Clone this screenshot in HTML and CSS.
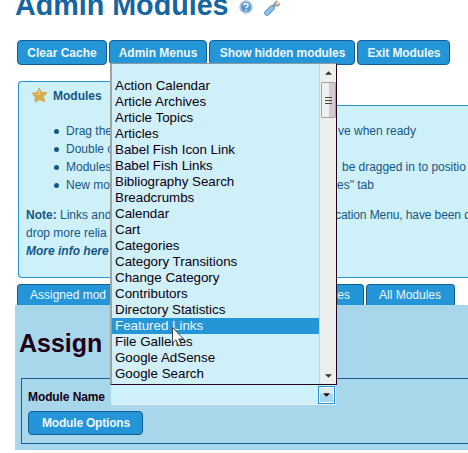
FILE: index.html
```html
<!DOCTYPE html>
<html lang="en">
<head>
<meta charset="utf-8">
<title>Admin Modules</title>
<link rel="stylesheet" href="styles.css">
</head>
<body>
<header class="page-head">
  <h1>Admin Modules</h1>
  <svg class="help" viewBox="0 0 14 14" width="14" height="14"><circle cx="7" cy="7" r="6" fill="#78acd9" stroke="#b3c7db" stroke-width="1.6"/><circle cx="7" cy="7" r="4.5" fill="#5594cd"/><path d="M5 5.5C5 3.3 9 3.3 9 5.5 9 6.9 7 6.8 7 8.2M7 9.5v1.4" fill="none" stroke="#fff" stroke-width="1.5"/></svg>
  <svg class="wrench" viewBox="0 0 17 16" width="17" height="16"><path d="M8 7.5 12 3.5" stroke="#8c8885" stroke-width="2.6"/><path d="M13.5 1 11 3.2 11.3 5.4 13.5 5.8 16 3.6" fill="none" stroke="#aaa39d" stroke-width="2"/><path d="M3 13 8 8" stroke="#5693c7" stroke-width="5.4" stroke-linecap="round"/><path d="M3 13 8 8" stroke="#9dcbed" stroke-width="3.2" stroke-linecap="round"/><path d="M4 12.5 8 8.5" stroke="#6aa6d6" stroke-width="1"/></svg>
</header>
<nav class="actions">
  <a class="button clear">Clear Cache</a>
  <a class="button menus">Admin Menus</a>
  <a class="button hidden-modules">Show hidden modules</a>
  <a class="button exit">Exit Modules</a>
</nav>
<section class="notice">
  <div class="notice-title">
    <svg viewBox="0 0 17 16" width="17" height="16"><path d="M8.2 1 10.2 5.2 16 5.6 12.2 9.5 13.8 14.7 8.6 12.8 4 15 4.2 10 1 6.3 6 5.5Z" fill="#d9ac4b" stroke="#cba253" stroke-width=".8"/><path d="M8 3 8.8 7 5 7.5" fill="none" stroke="#eccb79" stroke-width="1.2"/></svg>
    <span>Modules</span>
  </div>
  <div class="notice-body">
    <div class="lines">
      <div class="row"><span class="left item">Drag the</span><span class="r1">ve when ready</span></div>
      <div class="row"><span class="left item">Double c</span></div>
      <div class="row"><span class="left item">Modules</span><span class="r2">be dragged in to positio</span></div>
      <div class="row"><span class="left item">New mo</span><span class="r3">es" tab</span></div>
    </div>
    <div class="note">
      <div class="row"><span class="left"><b>Note:</b> Links and</span><span class="r4">cation Menu, have been d</span></div>
      <div class="row"><span class="left">drop more relia</span></div>
      <div class="row"><b><i>More info here</i></b></div>
    </div>
  </div>
</section>
<nav class="tabs">
  <a class="tab assigned">Assigned mod</a>
  <a class="tab modules">es</a>
  <a class="tab all">All Modules</a>
</nav>
<main class="panel">
  <h2>Assign</h2>
  <div class="fieldset">
    <div class="field"><label>Module Name</label>
      <div class="select"><span class="select-button"><svg viewBox="0 0 8 4" width="7" height="4"><path d="M0 0H8L4 4Z" fill="#200017"/></svg></span></div>
    </div>
    <a class="button options">Module Options</a>
  </div>
</main>
<div class="dropdown">
  <ul>
    <li>Action Calendar</li><li>Article Archives</li><li>Article Topics</li><li>Articles</li><li>Babel Fish Icon Link</li><li>Babel Fish Links</li><li>Bibliography Search</li><li>Breadcrumbs</li><li>Calendar</li><li>Cart</li><li>Categories</li><li>Category Transitions</li><li>Change Category</li><li>Contributors</li><li>Directory Statistics</li><li class="selected">Featured Links</li><li>File Galleries</li><li>Google AdSense</li><li>Google Search</li>
  </ul>
  <div class="scrollbar">
    <svg class="up" viewBox="0 0 8 4" width="7" height="4"><path d="M0 4H8L4 0Z" fill="#3a302d"/></svg>
    <div class="thumb"><i></i><i></i><i></i></div>
    <svg class="down" viewBox="0 0 8 4" width="7" height="4"><path d="M0 0H8L4 4Z" fill="#3a302d"/></svg>
  </div>
</div>
<svg class="cursor" viewBox="0 0 13 20" width="13" height="20"><path d="M.5 .5V16L4 12.8 6.7 18.8 9.3 17.7 6.7 12H11.5Z" fill="#fff" stroke="#333" stroke-width=".9"/></svg>
</body>
</html>
```

FILE: styles.css
```css
* { box-sizing: border-box; }
html, body { margin: 0; height: 453px; overflow: hidden; background: #fff; }
body { position: relative; width: 468px; font: 12px/18px "Liberation Sans", Arial, sans-serif; color: #165786; }
.page-head { height: 40px; display: flex; align-items: flex-start; padding-left: 15px; }
h1 { margin: -11px 0 0; width: 224px; font-size: 28.7px; line-height: 32px; color: #1565a2; white-space: nowrap; }
.wrench { margin-left: 11px; }
.actions { display: flex; gap: 2px; padding-left: 17px; height: 41px; }
.button { display: flex; align-items: center; justify-content: center; height: 25px; border: 1px solid #165c95; border-radius: 4px; background: #2496d8; color: #eef8fc; font-weight: bold; white-space: nowrap; }
.clear { width: 90px; }
.menus { width: 98px; }
.hidden-modules { width: 146px; padding-left: 1px; letter-spacing: -.1px; }
.exit { width: 93px; padding-left: 1px; letter-spacing: -.1px; }
.notice { margin-left: 18px; height: 197px; display: flex; flex-direction: column; }
.notice-title { position: relative; width: 200px; height: 25px; margin-bottom: -1px; z-index: 1; display: flex; gap: 5px; padding: 5px 0 0 12px; border: 1px solid #2496d8; border-width: 1px 0 0 1px; border-radius: 4px 0 0; background: #cef0f9; font-weight: bold; }
.notice-body { height: 173px; border: 1px solid #2496d8; border-right: 0; border-radius: 0 0 0 4px; background: #cef0f9; padding: 16px 0 0 7px; }
.row { display: flex; height: 18px; white-space: nowrap; }
.left { width: 88px; overflow: hidden; flex: none; }
.lines .left { margin-left: 40px; width: 50px; }
.lines .row::before { content: ""; width: 5px; height: 5px; border-radius: 50%; background: #165786; margin: 7px -33px 0 28px; flex: none; }
.r1 { margin-left: 222px; }
.r2 { margin-left: 226px; letter-spacing: -.04px; }
.r3 { margin-left: 221px; }
.r4 { margin-left: 221px; letter-spacing: -.1px; }
.note { margin-top: 12px; }
.tabs { display: flex; padding-left: 17px; height: 27px; align-items: flex-end; }
.tab { height: 21px; border: 1px solid #165c95; border-bottom: 0; border-radius: 4px 4px 0 0; background: #2496d8; color: #eef8fc; white-space: nowrap; line-height: 20px; }
.assigned { width: 120px; padding-left: 12px; }
.modules { width: 64px; margin-left: 163px; padding-right: 13px; text-align: right; }
.all { width: 89px; margin-left: 2px; padding-left: 12px; }
.panel { margin-left: 15px; height: 145px; background: #a8d7eb; padding: 22px 0 0 6px; }
h2 { margin: 0 0 19px -2px; font-size: 25px; line-height: 32px; color: #200017; }
.fieldset { height: 66px; border: 1px solid #165c95; border-right: 0; padding: 6px; }
.field { display: flex; height: 20px; }
label { width: 83px; color: #170014; font-weight: bold; line-height: 24px; letter-spacing: -.1px; }
.select { width: 225px; height: 20px; border-bottom: 1px solid #eeeef0; padding: 1px; display: flex; justify-content: flex-end; }
.select-button { width: 17px; height: 18px; border: 1px solid #2496d8; background: linear-gradient(#dcebf0 45%, #a8d7eb 45%); display: flex; align-items: center; justify-content: center; box-shadow: inset 0 0 0 1px #fff; }
.options { width: 115px; height: 24px; margin-top: 6px; padding-left: 1px; letter-spacing: -.2px; }
.dropdown { position: absolute; z-index: 2; left: 110px; top: 63px; width: 227px; height: 322px; border: 1px solid #200017; border-top-color: #8c9ba2; border-left: 2px solid #a4a19f; display: flex; }
.dropdown ul, .select { background: conic-gradient(from 0deg at 1px 1px, #cef0f9 0 75%, #deeef6 75%) 0 0 / 4px 4px; }
ul { list-style: none; margin: 0; padding: 14px 0 0; flex: 1; color: #080010; font-size: 13.33px; line-height: 16px; }
li { height: 16px; padding-left: 3px; }
.selected { background: #2496d8; color: #eef8fc; }
.scrollbar { width: 17px; height: 320px; border-left: 1px solid #d5cfd6; background: #edefee; display: flex; flex-direction: column; align-items: center; }
.up { margin-top: 7px; }
.thumb { margin-top: 7px; width: 15px; height: 36px; border: 1px solid #a4a19f; border-radius: 1px; background: linear-gradient(90deg, #eef0ef 50%, #d1cad2 50%); display: flex; flex-direction: column; align-items: center; justify-content: center; gap: 2px; }
.thumb i { width: 7px; height: 1px; background: #514743; }
.down { margin-top: auto; margin-bottom: 6px; }
.cursor { position: absolute; z-index: 3; left: 172px; top: 327px; }
```
